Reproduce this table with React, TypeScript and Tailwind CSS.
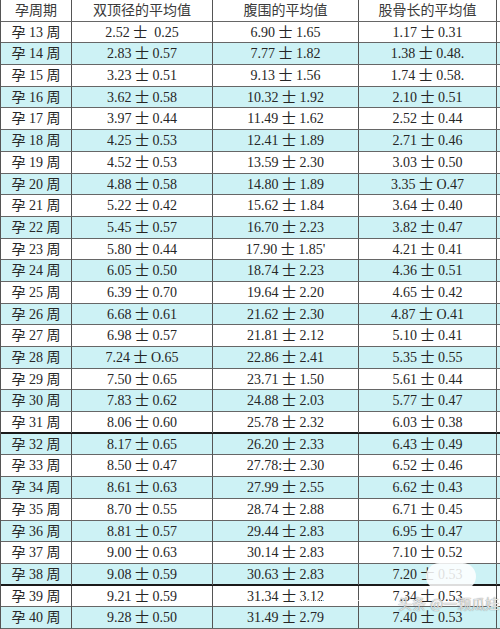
const rows: [number, string, string, string][] = [
  [13, '2.52 士  0.25', '6.90 士 1.65', '1.17 士 0.31'],
  [14, '2.83 士 0.57', '7.77 士 1.82', '1.38 士 0.48.'],
  [15, '3.23 士 0.51', '9.13 士 1.56', '1.74 士 0.58.'],
  [16, '3.62 士 0.58', '10.32 士 1.92', '2.10 士 0.51'],
  [17, '3.97 士 0.44', '11.49 士 1.62', '2.52 士 0.44'],
  [18, '4.25 士 0.53', '12.41 士 1.89', '2.71 士 0.46'],
  [19, '4.52 士 0.53', '13.59 士 2.30', '3.03 士 0.50'],
  [20, '4.88 士 0.58', '14.80 士 1.89', '3.35 士 O.47'],
  [21, '5.22 士 0.42', '15.62 士 1.84', '3.64 士 0.40'],
  [22, '5.45 士 0.57', '16.70 士 2.23', '3.82 士 0.47'],
  [23, '5.80 士 0.44', "17.90 士 1.85'", '4.21 士 0.41'],
  [24, '6.05 士 0.50', '18.74 士 2.23', '4.36 士 0.51'],
  [25, '6.39 士 0.70', '19.64 士 2.20', '4.65 士 0.42'],
  [26, '6.68 士 0.61', '21.62 士 2.30', '4.87 士 O.41'],
  [27, '6.98 士 0.57', '21.81 士 2.12', '5.10 士 0.41'],
  [28, '7.24 士 O.65', '22.86 士 2.41', '5.35 士 0.55'],
  [29, '7.50 士 0.65', '23.71 士 1.50', '5.61 士 0.44'],
  [30, '7.83 士 0.62', '24.88 士 2.03', '5.77 士 0.47'],
  [31, '8.06 士 0.60', '25.78 士 2.32', '6.03 士 0.38'],
  [32, '8.17 士 0.65', '26.20 士 2.33', '6.43 士 0.49'],
  [33, '8.50 士 0.47', '27.78:士 2.30', '6.52 士 0.46'],
  [34, '8.61 士 0.63', '27.99 士 2.55', '6.62 士 0.43'],
  [35, '8.70 士 0.55', '28.74 士 2.88', '6.71 士 0.45'],
  [36, '8.81 士 0.57', '29.44 士 2.83', '6.95 士 0.47'],
  [37, '9.00 士 0.63', '30.14 士 2.83', '7.10 士 0.52'],
  [38, '9.08 士 0.59', '30.63 士 2.83', '7.20 士 0.53'],
  [39, '9.21 士 0.59', '31.34 士 3.12', '7.34 士 0.53'],
  [40, '9.28 士 0.50', '31.49 士 2.79', '7.40 士 0.53'],
];

const font = "font-['Liberation_Serif','Noto_Sans_CJK_SC',serif]";

export default function App() {
  return (
    <div className={`relative w-[500px] h-[629px] overflow-hidden bg-white text-[14px] text-[#262626] ${font}`}>
      <div className="grid h-[629px] grid-rows-[repeat(29,minmax(0,1fr))] border-l border-[#555]">
        <div className="grid grid-cols-[71px_141px_146px_138px] border-b border-[#666] text-[#3a3a3a]">
          <div className="flex items-center justify-center border-r border-[#555]">孕周期</div>
          <div className="flex items-center justify-center border-r border-[#555]">双顶径的平均值</div>
          <div className="flex items-center justify-center border-r border-[#555]">腹围的平均值</div>
          <div className="flex items-center justify-center border-r border-[#555]">股骨长的平均值</div>
        </div>
        {rows.map(([week, a, b, c]) => (
          <div
            key={week}
            className={`grid grid-cols-[71px_141px_146px_138px] ${week % 2 === 0 ? 'bg-[#cdf2f5]' : 'bg-white'} ${
              week === 31 || week === 38 ? 'border-b-2 border-[#1a1a1a]' : 'border-b border-[#666]'
            }`}
          >
            <div className="flex items-center justify-center border-r border-[#555] whitespace-pre">孕 {week} 周</div>
            <div className="flex items-center justify-center border-r border-[#555] whitespace-pre">{a}</div>
            <div className="flex items-center justify-center border-r border-[#555] whitespace-pre">{b}</div>
            <div className="flex items-center justify-center border-r border-[#555] whitespace-pre">{c}</div>
          </div>
        ))}
      </div>

      {/* watermark */}
      <div className="absolute left-[426px] top-[563px] h-[27px] w-[50px] rounded-full bg-white/85" />
      <div className="absolute left-[300px] top-[600px] w-[95px] border-t border-dotted border-white/80" />
      <div className="absolute left-[398px] top-[593px] flex items-center gap-1 font-['Noto_Sans_CJK_SC',sans-serif] text-[14px] text-white/80 [text-shadow:0_0_1px_#555]">
        <span>头条</span>
        <span>@一颗瓜娃</span>
      </div>
    </div>
  );
}
